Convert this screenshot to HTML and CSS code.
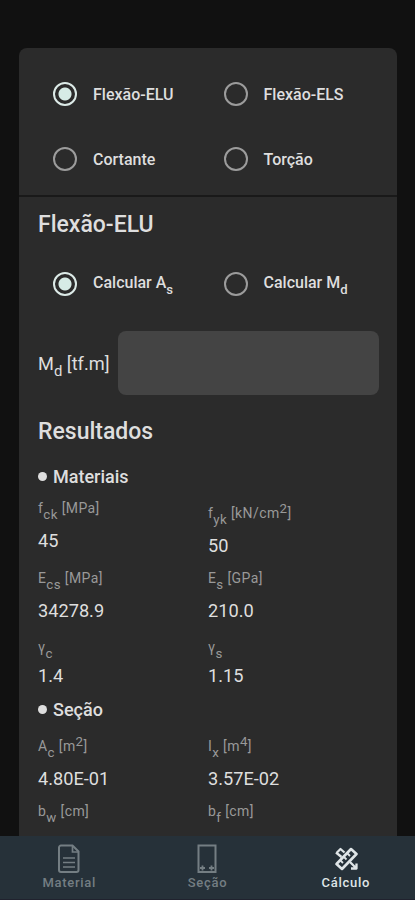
FILE: index.html
```
<!DOCTYPE html>
<html lang="pt-BR">
<head>
    <meta charset="UTF-8">
    <meta name="viewport" content="width=device-width, initial-scale=1.0">
    <title>Cálculo - Flexão-ELU</title>
    <link rel="stylesheet" href="styles.css">
</head>
<body>
    <main>
        <div class="card">
            <div class="options">
                <label><input type="radio" name="tipo" checked><span>Flexão-ELU</span></label>
                <label><input type="radio" name="tipo"><span>Flexão-ELS</span></label>
                <label><input type="radio" name="tipo"><span>Cortante</span></label>
                <label><input type="radio" name="tipo"><span>Torção</span></label>
            </div>

            <div class="content">
                <h2>Flexão-ELU</h2>
                <div class="options calc">
                    <label><input type="radio" name="calc" checked><span>Calcular A<sub>s</sub></span></label>
                    <label><input type="radio" name="calc"><span>Calcular M<sub>d</sub></span></label>
                </div>

                <div class="field">
                    <label for="md">M<sub>d</sub> [tf.m]</label>
                    <input type="text" id="md">
                </div>

                <h2 class="results-title">Resultados</h2>

                <h3><i class="dot"></i>Materiais</h3>
                <div class="row">
                    <div><p class="name">f<sub>ck</sub> [MPa]</p><p class="value">45</p></div>
                    <div class="lower"><p class="name">f<sub>yk</sub> [kN/cm<sup>2</sup>]</p><p class="value">50</p></div>
                </div>
                <div class="row">
                    <div><p class="name">E<sub>cs</sub> [MPa]</p><p class="value">34278.9</p></div>
                    <div><p class="name">E<sub>s</sub> [GPa]</p><p class="value">210.0</p></div>
                </div>
                <div class="row short">
                    <div><p class="name">γ<sub>c</sub></p><p class="value">1.4</p></div>
                    <div><p class="name">γ<sub>s</sub></p><p class="value">1.15</p></div>
                </div>

                <h3 class="section"><i class="dot"></i>Seção</h3>
                <div class="row geometry">
                    <div><p class="name">A<sub>c</sub> [m<sup>2</sup>]</p><p class="value">4.80E-01</p></div>
                    <div><p class="name">I<sub>x</sub> [m<sup>4</sup>]</p><p class="value">3.57E-02</p></div>
                </div>
                <div class="row">
                    <div><p class="name">b<sub>w</sub> [cm]</p></div>
                    <div><p class="name">b<sub>f</sub> [cm]</p></div>
                </div>
            </div>
        </div>
    </main>

    <nav>
        <a href="#">
            <svg width="24" height="30" viewBox="0 0 24 30" fill="none" stroke="currentColor" stroke-width="2">
                <path d="M4 1.5h11.5l6 6V26a2 2 0 0 1-2 2H4a2 2 0 0 1-2-2V3.5a2 2 0 0 1 2-2z"/>
                <path d="M15.5 2v6h6M6 14h12M6 18.5h12M6 23h12" stroke-width="1.7"/>
            </svg>
            <span>Material</span>
        </a>
        <a href="#">
            <svg width="24" height="30" viewBox="0 0 24 30" fill="none" stroke="currentColor" stroke-width="2">
                <rect x="3.5" y="1.5" width="17" height="26.5"/>
                <path d="M5 24h5M7.5 21.500v5M14 24h5M16.500 21.500v5" stroke-width="1.8"/>
            </svg>
            <span>Seção</span>
        </a>
        <a href="#" class="active">
            <svg width="24" height="30" viewBox="0 0 24 30" fill="none" stroke="currentColor" stroke-width="2.6" stroke-linejoin="round">
                <path d="M2.5 20L17 5l5.500 5L8 25z"/>
                <path d="M6.5 16.5l2.500 2.500M10 13l2.500 2.500M13.500 9.500l2.500 2.500" stroke-width="1.8"/>
                <path d="M7.500 13L2 8.500M2.500 9L6.500 5l4 3.500M16 18l6 6M17 24.500h5.500v-5" stroke-width="2.300"/>
            </svg>
            <span>Cálculo</span>
        </a>
    </nav>
</body>
</html>
```
FILE: styles.css
```
* {
    box-sizing: border-box;
    margin: 0;
    padding: 0;
}

body {
    font-family: Roboto, sans-serif;
    background: #111;
    color: #dedede;
    display: flex;
    flex-direction: column;
    height: 100vh;
    overflow: hidden;
}

main {
    flex: 1;
    min-height: 0;
    overflow: hidden;
    padding: 48px 18px 0 19px;
}

.card {
    background: #2b2b2b;
    border-radius: 8px;
    height: 900px;
}

.options {
    display: grid;
    grid-template-columns: 170.5px 1fr;
    grid-auto-rows: 64.5px;
    height: 149px;
    padding: 14px 0 0 34px;
    border-bottom: 2px solid #191919;
}

.options label {
    display: flex;
    align-items: center;
    font-size: 16px;
    font-weight: 500;
}

.options span {
    margin-top: 1px;
}

.options input {
    appearance: none;
    width: 24px;
    height: 24px;
    margin-right: 16px;
    border: 2.5px solid #9c9c9c;
    border-radius: 50%;
}

.options input:checked {
    border-color: #dceae7;
    background: radial-gradient(circle, #d6ebe6 6px, transparent 7px);
}

.options.calc {
    height: 65px;
    padding: 0 0 0 15px;
    border: none;
}

.options.calc span {
    margin-top: -4px;
}

sub,
sup {
    font-size: 0.82em;
    line-height: 0;
}

sub {
    vertical-align: -6px;
}

sup {
    vertical-align: 5px;
}

.content {
    padding: 12px 18px 0 19px;
}

h2 {
    font-size: 23px;
    font-weight: 500;
    line-height: 32px;
    margin-bottom: 11px;
}

.field {
    display: flex;
    align-items: center;
    margin-top: 14px;
}

.field label {
    width: 80px;
    font-size: 18.2px;
    white-space: nowrap;
}

.field input {
    flex: 1;
    min-width: 0;
    height: 64px;
    background: #444;
    color: #dedede;
    border: none;
    border-radius: 8px;
    font-size: 18px;
    padding: 0 16px;
}

.results-title {
    margin: 21px 0 16.5px;
}

h3 {
    display: flex;
    align-items: center;
    font-size: 18px;
    font-weight: 500;
    line-height: 24px;
    height: 32.5px;
    padding-bottom: 8.5px;
}

h3.section {
    height: 37.5px;
    padding-bottom: 13.5px;
}

.dot {
    width: 9px;
    height: 9px;
    margin-right: 6px;
    border-radius: 50%;
    background: #dedede;
}

.row {
    display: grid;
    grid-template-columns: 170px 1fr;
    height: 69.5px;
}

.row.short {
    height: 61.5px;
}

.row.geometry {
    height: 65px;
}

.lower {
    padding-top: 5px;
}

.name {
    font-size: 14px;
    line-height: 22px;
    height: 32px;
    letter-spacing: 0.4px;
    color: #999;
}

.name sub,
.name sup {
    font-size: 0.95em;
}

.short .name {
    height: 27.5px;
}

.value {
    font-size: 18.2px;
    line-height: 24px;
}

nav {
    display: flex;
    height: 64px;
    background: #263139;
    border-bottom: 1px solid #20222e;
}

nav a {
    flex: 1;
    display: flex;
    flex-direction: column;
    align-items: center;
    padding-top: 8px;
    color: #747e83;
    text-decoration: none;
    font-size: 13px;
    font-weight: 500;
    letter-spacing: 0.7px;
}

nav svg {
    margin-bottom: 1px;
}

nav a.active {
    color: #dfe5e7;
}
```
